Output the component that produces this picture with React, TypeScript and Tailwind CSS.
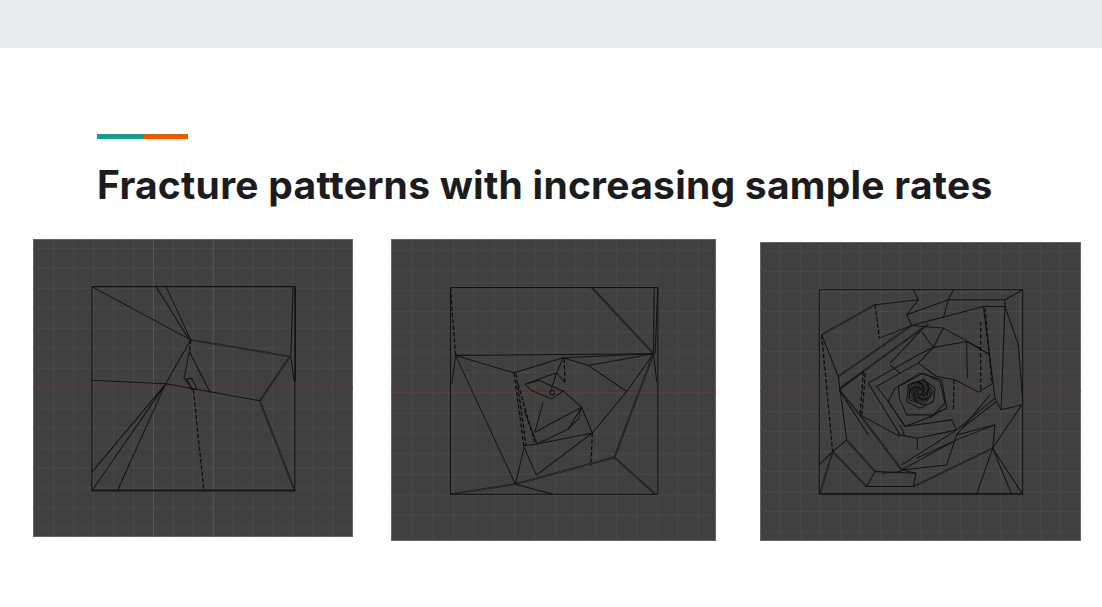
import React from 'react';

type Sheet = {
  box: string;
  cols: number[];
  bright: number[];
  rows: number[];
  redY: number;
  solid: string[];
  double: string[];
  dashed: string[];
};

const range = (from: number, to: number, step: number) => {
  const out: number[] = [];
  for (let v = from; v <= to; v += step) out.push(v);
  return out;
};

// dense middle of the last sheet: pentagons that shrink and turn
const spiral = (cx: number, cy: number) => {
  const rings: string[] = [];
  for (let i = 0; i < 10; i++) {
    const r = 40 - i * 3.8;
    const pts = range(0, 5, 1).map((k) => {
      const a = (k * 72 + i * 14) * (Math.PI / 180);
      return `${(cx + Math.cos(a) * r).toFixed(1)},${(cy + Math.sin(a) * r).toFixed(1)}`;
    });
    rings.push(pts.join(' '));
  }
  return rings;
};

const sheets: Sheet[] = [
  {
    box: '8 12 962 895',
    cols: range(70, 910, 60),
    bright: [370, 550],
    rows: range(40, 880, 60),
    redY: 460,
    solid: [
      '185,155 795,155 795,768 185,768 185,155',
      '185,155 482,315',
      '408,155 482,315',
      '378,155 475,310',
      '482,315 405,450 262,768',
      '405,450 185,712',
      '405,450 185,768',
      '185,436 405,447 425,450 690,498',
      '478,350 540,472',
      '478,350 462,430 490,465',
      '470,432 485,430 500,460 485,465 470,432',
      '790,155 783,365 793,440',
      '797,155 797,440',
    ],
    double: ['482,315 780,365', '780,365 690,498', '690,498 795,768', '185,767 795,767'],
    dashed: ['490,465 522,768', '482,315 478,350'],
  },
  {
    box: '10 12 972 903',
    cols: range(75, 945, 61),
    bright: [257, 560],
    rows: range(45, 885, 61),
    redY: 466,
    solid: [
      '188,157 808,157 808,775 188,775 188,157',
      '203,360 795,355',
      '797,157 795,355 805,440',
      '808,157 800,355',
      '203,360 192,445',
      '203,360 378,412 525,367 795,355',
      '203,360 382,745',
      '525,367 600,390 715,468',
      '600,390 795,355',
      '795,355 715,468 612,592 445,718',
      '382,745 495,775',
      '382,745 408,635 445,718',
      '612,592 580,515 525,467 455,435 415,445',
      '408,630 447,625 540,580 580,515',
      '447,625 612,592',
      '408,525 447,625',
      '440,590 580,515',
      '440,590 465,500',
      '415,445 505,412 525,367',
      '505,412 530,440',
      '505,412 490,460',
      '410,445 430,465 490,490 528,465',
      '580,515 570,550 540,580',
    ],
    double: ['610,157 795,355', '795,355 678,665', '678,665 382,745', '678,665 800,775', '382,745 190,775'],
    dashed: [
      '188,157 203,360',
      '378,412 408,635',
      '384,415 414,630',
      '390,445 440,620',
      '612,592 608,690',
      '528,370 530,440',
    ],
  },
  {
    box: '10 12 963 896',
    cols: range(72, 912, 60),
    bright: [253, 374, 554],
    rows: range(40, 880, 60),
    redY: 461,
    solid: [
      '188,155 798,155 798,768 188,768 188,155',
      '355,200 485,185 470,155',
      '485,185 450,230 465,262',
      '368,300 465,262 680,205 745,205',
      '450,230 575,185 745,185 798,155',
      '575,185 590,155',
      '575,185 560,240',
      '745,185 745,205 785,320 798,490',
      '745,205 733,515 795,500',
      '680,205 715,480 733,515',
      '195,290 245,415 270,605 228,640',
      '248,455 320,400',
      '228,640 188,680',
      '355,700 330,745 470,745 478,705 355,700',
      '478,705 435,695',
      '708,630 660,768',
      '708,630 765,768',
      '708,630 798,768',
      '708,630 715,560 600,590 570,680 435,695',
      '708,630 795,500',
      '335,435 485,350 530,328 630,310 700,350',
      '495,280 530,328 485,375',
      '630,310 632,420',
      '465,262 560,270 670,330',
      '360,445 430,405 485,375 540,415 595,425',
      '360,445 395,490',
      '335,435 430,590 482,600 600,575',
      '595,425 665,462 710,435',
      '400,380 430,405',
      '395,490 415,450 490,405 555,425 570,510 510,540 445,565 395,490',
      '430,485 425,445 500,405 550,430 565,495 530,530 450,530 430,485',
      '450,490 455,440 500,425 535,450 530,490 490,510 450,490',
      '445,565 585,545 600,575',
      '482,600 482,635',
      '310,530 430,595',
      '600,575 715,480',
      '435,680 600,575',
      '480,660 600,605 715,560',
      '435,695 590,610',
      '600,590 700,470',
      '615,570 720,490',
      '500,270 400,375',
      '560,270 530,328',
      '520,540 555,515',
      '395,490 445,565',
      '375,705 435,700',
      '430,560 445,595',
      '250,460 335,590',
    ],
    double: [
      '195,290 355,200',
      '245,415 465,262',
      '250,450 515,258',
      '248,455 310,530 435,695',
      '270,605 355,700',
      '228,640 330,745',
      '228,640 190,765',
      '470,745 708,630',
      '188,766 798,766',
    ],
    dashed: [
      '355,200 368,300',
      '195,290 228,640',
      '672,250 672,460',
      '685,210 705,430',
      '320,400 310,530',
      '326,405 316,530',
      '592,425 590,520',
    ],
  },
];

const Sheet = ({ sheet, className }: { sheet: Sheet; className: string }) => {
  const [x, y, w, h] = sheet.box.split(' ').map(Number);
  return (
    <div className={`shrink-0 overflow-hidden bg-[#404040] outline outline-[#8a8a8a]/50 -outline-offset-1 ${className}`}>
      <svg viewBox={sheet.box} preserveAspectRatio="none" className="block h-full w-full blur-[0.45px]">
        {sheet.rows.map((r) => (
          <line key={r} x1={x} x2={x + w} y1={r} y2={r} stroke="#4a4a4a" strokeWidth="2.6" />
        ))}
        {sheet.cols.map((c) => (
          <line
            key={c}
            x1={c}
            x2={c}
            y1={y}
            y2={y + h}
            stroke={sheet.bright.includes(c) ? '#5a5a5a' : '#4a4a4a'}
            strokeWidth="2.6"
          />
        ))}
        <line x1={x} x2={x + w} y1={sheet.redY} y2={sheet.redY} stroke="#672c2c" strokeWidth="2.4" />
        <g fill="none" strokeLinejoin="round">
          {sheet === sheets[1] && <line x1="430" y1="465" x2="525" y2="467" stroke="#6e2626" strokeWidth="2.6" />}
          {sheet.double.map((p) => (
            <g key={p}>
              <polyline points={p} stroke="#161616" strokeWidth="5.5" />
              <polyline points={p} stroke="#454545" strokeWidth="1.6" />
            </g>
          ))}
          {sheet.solid.map((p) => (
            <polyline key={p} points={p} stroke="#131313" strokeWidth="3.1" />
          ))}
          {sheet.dashed.map((p) => (
            <polyline key={p} points={p} stroke="#0e0e0e" strokeWidth="3.8" strokeDasharray="13 6" />
          ))}
          {sheet === sheets[1] && <circle cx="492" cy="471" r="7" stroke="#0e0e0e" strokeWidth="3" />}
          {sheet === sheets[2] &&
            spiral(490, 462).map((p) => <polyline key={p} points={p} stroke="#0e0e0e" strokeWidth="2.6" />)}
        </g>
      </svg>
    </div>
  );
};

const App = () => {
  return (
    <div className="h-[607px] w-[1102px] overflow-hidden bg-white">
      <div className="h-12 bg-[#e9eced]" />
      <div className="pl-[97px] pt-[86px]">
        <div className="flex h-[5px] w-[91px]">
          <div className="w-[46px] bg-[#1a9c8a]" />
          <div className="flex-1 bg-[#ee5a00]" />
        </div>
        <h1 className="mt-[21px] whitespace-nowrap font-['Inter',sans-serif] text-[39px] leading-[50px] font-bold tracking-[0.25px] text-[#1c1c1e]">
          Fracture patterns with increasing sample rates
        </h1>
      </div>
      <div className="mt-[29px] flex items-start pl-[33px]">
        <Sheet sheet={sheets[0]} className="h-[298px] w-[320px]" />
        <Sheet sheet={sheets[1]} className="ml-[38px] h-[302px] w-[325px]" />
        <Sheet sheet={sheets[2]} className="ml-[44px] mt-[3px] h-[299px] w-[321px]" />
      </div>
    </div>
  );
};

export default App;
